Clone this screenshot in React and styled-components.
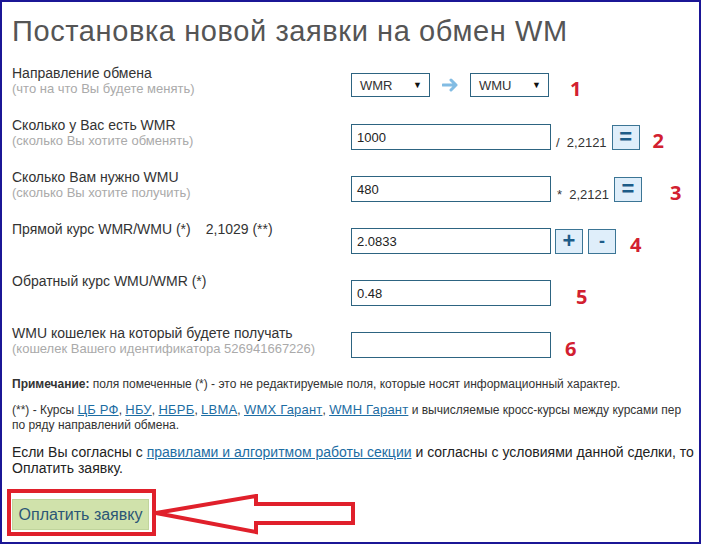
import React from 'react'
import styled, { createGlobalStyle } from 'styled-components'

const GlobalStyle = createGlobalStyle`
  html, body {
    margin: 0;
    padding: 0;
    background: #fff;
  }
  body {
    font-family: "Liberation Sans", Arial, sans-serif;
  }
`

const Frame = styled.div`
  box-sizing: border-box;
  width: 701px;
  height: 544px;
  border: 2px solid #1b1696;
  overflow: hidden;
  padding: 0 0 0 10px;
  background: #fff;
  color: #333;
`

const Title = styled.h1`
  margin: 11px 0 0;
  font-size: 29px;
  line-height: 36px;
  font-weight: normal;
  color: #555;
  letter-spacing: 0.6px;
`

const Form = styled.div`
  margin-top: 16px;
  display: flex;
  flex-direction: column;
`

const Row = styled.div`
  display: grid;
  grid-template-columns: 339px 1fr;
  height: 52px;
`

const Label = styled.div`
  font-size: 14px;
  line-height: 16px;
  color: #333;
  white-space: nowrap;
`

const Gap = styled.span`
  display: inline-block;
  width: 15px;
`

const Hint = styled.div`
  font-size: 13px;
  line-height: 16px;
  color: #aaa;
`

const Controls = styled.div`
  display: flex;
  align-items: center;
  height: 26px;
  margin-top: 7px;
`

const Select = styled.div`
  box-sizing: border-box;
  width: 79px;
  height: 24px;
  border: 1px solid #2d6481;
  display: flex;
  align-items: center;
  justify-content: space-between;
  padding: 0 7px 0 8px;
  font-size: 13px;
  color: #333;
  span.caret {
    font-size: 9px;
    color: #111;
  }
`

const ArrowIcon = styled.svg`
  margin: 0 11px 0 12px;
`

const Input = styled.div`
  box-sizing: border-box;
  width: 200px;
  height: 26px;
  border: 1px solid #2d6481;
  padding: 0 5px;
  display: flex;
  align-items: center;
  font-size: 13px;
  color: #222;
`

const Rate = styled.span`
  align-self: flex-end;
  font-size: 13px;
  color: #333;
  margin-left: ${(p) => p.$ml}px;
  margin-right: 5px;
  white-space: pre;
`

const SmallBtn = styled.div`
  box-sizing: border-box;
  width: 28px;
  height: 25px;
  border: 1px solid #3b7595;
  background: #dfeefa;
  color: #1d5c88;
  display: flex;
  align-items: center;
  justify-content: center;
  font-size: ${(p) => (p.$big ? 22 : 18)}px;
  font-weight: bold;
  margin-left: ${(p) => p.$ml || 0}px;
`

const Num = styled.span`
  font-family: "Open Sans", "Liberation Sans", sans-serif;
  font-weight: 700;
  font-size: 20px;
  color: #d22030;
  margin-left: ${(p) => p.$ml}px;
  margin-top: 6px;
`

const Note = styled.p`
  margin: ${(p) => p.$mt}px 0 0;
  font-size: ${(p) => p.$size || 12}px;
  line-height: ${(p) => p.$lh || 16}px;
  color: ${(p) => p.$color || '#333'};
  b {
    font-weight: bold;
  }
`

const Link = styled.a`
  color: #1d6da3;
  text-decoration: underline;
  font-size: ${(p) => p.$size || 13}px;
  letter-spacing: ${(p) => (p.$size ? 0 : 0.2)}px;
`

const NoWrap = styled.span`
  white-space: nowrap;
`

const Submit = styled.div`
  display: flex;
  align-items: center;
  margin: 13px 0 0 -5px;
`

const RedBox = styled.div`
  border: 4px solid #e0202b;
  padding: 6px 3px 2px 1px;
`

const PayButton = styled.div`
  box-sizing: border-box;
  width: 137px;
  height: 31px;
  background: #d0e2ab;
  border: 1px solid #c0d49c;
  color: #2b5676;
  font-size: 16px;
  display: flex;
  align-items: center;
  justify-content: center;
`

const Pointer = styled.svg`
  margin-left: -4px;
  margin-top: 4px;
`

const Arrow = () => (
  <ArrowIcon width="17" height="14" viewBox="0 0 17 14">
    <path d="M1 7 H14 M9 2 L14 7 L9 12" fill="none" stroke="#82bce3" strokeWidth="3" strokeLinecap="round" strokeLinejoin="round" />
  </ArrowIcon>
)

export default function App () {
  return (
    <>
      <GlobalStyle />
      <Frame>
        <Title>Постановка новой заявки на обмен WM</Title>
        <Form>
          <Row>
            <div>
              <Label>Направление обмена</Label>
              <Hint>(что на что Вы будете менять)</Hint>
            </div>
            <Controls>
              <Select>WMR<span className="caret">▼</span></Select>
              <Arrow />
              <Select>WMU<span className="caret">▼</span></Select>
              <Num $ml={21}>1</Num>
            </Controls>
          </Row>
          <Row>
            <div>
              <Label>Сколько у Вас есть WMR</Label>
              <Hint>(сколько Вы хотите обменять)</Hint>
            </div>
            <Controls>
              <Input>1000</Input>
              <Rate $ml={5}>/  2,2121</Rate>
              <SmallBtn $big>=</SmallBtn>
              <Num $ml={13}>2</Num>
            </Controls>
          </Row>
          <Row>
            <div>
              <Label>Сколько Вам нужно WMU</Label>
              <Hint>(сколько Вы хотите получить)</Hint>
            </div>
            <Controls>
              <Input>480</Input>
              <Rate $ml={6}>*  2,2121</Rate>
              <SmallBtn $big>=</SmallBtn>
              <Num $ml={28}>3</Num>
            </Controls>
          </Row>
          <Row>
            <div>
              <Label>Прямой курс WMR/WMU (*)<Gap />2,1029 (**)</Label>
            </div>
            <Controls>
              <Input>2.0833</Input>
              <SmallBtn $big $ml={4}>+</SmallBtn>
              <SmallBtn $ml={5}>-</SmallBtn>
              <Num $ml={14}>4</Num>
            </Controls>
          </Row>
          <Row>
            <div>
              <Label>Обратный курс WMU/WMR (*)</Label>
            </div>
            <Controls>
              <Input>0.48</Input>
              <Num $ml={25}>5</Num>
            </Controls>
          </Row>
          <Row>
            <div>
              <Label>WMU кошелек на который будете получать</Label>
              <Hint>(кошелек Вашего идентификатора 526941667226)</Hint>
            </div>
            <Controls>
              <Input />
              <Num $ml={14}>6</Num>
            </Controls>
          </Row>
        </Form>
        <Note $mt={-1}>
          <b>Примечание:</b> поля помеченные (*) - это не редактируемые поля, которые носят информационный характер.
        </Note>
        <Note $mt={10} $lh={15}>
          <NoWrap>
            (**) - Курсы <Link>ЦБ РФ</Link>, <Link>НБУ</Link>, <Link>НБРБ</Link>, <Link>LBMA</Link>, <Link>WMX Гарант</Link>, <Link>WMH Гарант</Link> и вычисляемые кросс-курсы между курсами пер
          </NoWrap>
          <br />
          по ряду направлений обмена.
        </Note>
        <Note $mt={11} $size={14} $color="#222">
          Если Вы согласны с <Link $size={14}>правилами и алгоритмом работы секции</Link> и согласны с условиями данной сделки, то Оплатить заявку.
        </Note>
        <Submit>
          <RedBox>
            <PayButton>Оплатить заявку</PayButton>
          </RedBox>
          <Pointer width="206" height="42" viewBox="0 0 206 42">
            <path d="M4 19 L104 2 V10 H201 V29 H104 V38 Z" fill="none" stroke="#e0202b" strokeWidth="4" strokeLinejoin="miter" />
          </Pointer>
        </Submit>
      </Frame>
    </>
  )
}
